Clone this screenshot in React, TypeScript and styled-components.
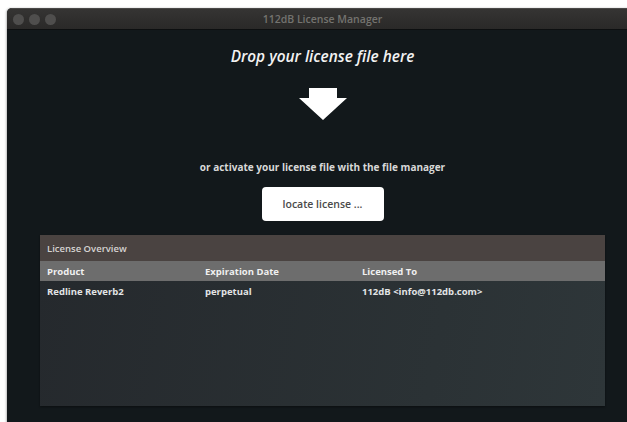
import React from "react";
import styled, { createGlobalStyle } from "styled-components";

const GlobalStyle = createGlobalStyle`
  html, body {
    margin: 0;
    padding: 0;
    background: #ffffff;
    overflow: hidden;
  }
  body {
    font-family: "Open Sans", "DejaVu Sans", sans-serif;
  }
`;

const Window = styled.div`
  margin: 8px 0 0 7px;
  width: 631px;
  height: 430px;
  display: flex;
  flex-direction: column;
  background: #12181b;
  border-top-left-radius: 5px;
  overflow: hidden;
  box-shadow: -1px 0 2px rgba(0, 0, 0, 0.25);
`;

const TitleBar = styled.div`
  position: relative;
  height: 22px;
  flex: none;
  display: flex;
  align-items: center;
  justify-content: center;
  background: linear-gradient(#353433, #2a2928);
  border-top: 1px solid #4a4948;
  box-sizing: border-box;
  border-bottom: 1px solid #0d0f10;
`;

const Lights = styled.div`
  position: absolute;
  left: 6px;
  top: 5px;
  display: flex;
  gap: 5px;
`;

const Light = styled.span`
  width: 11px;
  height: 11px;
  border-radius: 50%;
  background: #4f4e4d;
`;

const Title = styled.div`
  font-size: 10.5px;
  font-weight: 600;
  color: #74736f;
`;

const Content = styled.div`
  flex: 1;
  display: flex;
  flex-direction: column;
  align-items: center;
  padding-top: 17px;
`;

const DropText = styled.div`
  font-size: 15.4px;
  font-style: italic;
  font-weight: 600;
  color: #f2f2f2;
  line-height: 20px;
`;

const Arrow = styled.svg`
  margin-top: 21px;
  display: block;
`;

const Hint = styled.div`
  margin-top: 40px;
  font-size: 10px;
  font-weight: 700;
  color: #d8d8d8;
  line-height: 14px;
`;

const LocateButton = styled.button`
  margin-top: 13px;
  width: 122px;
  height: 34px;
  border: none;
  border-radius: 4px;
  background: #ffffff;
  color: #4a4a4a;
  font-family: "Open Sans", "DejaVu Sans", sans-serif;
  font-size: 10.5px;
  font-weight: 600;
  cursor: pointer;
`;

const Panel = styled.div`
  margin-top: 14px;
  width: 565px;
  height: 171px;
  display: flex;
  flex-direction: column;
  background: linear-gradient(100deg, #25292d 0%, #2b3235 70%, #2e3639 100%);
  box-shadow: 0 1px 2px rgba(0, 0, 0, 0.4);
`;

const PanelHeader = styled.div`
  height: 26px;
  display: flex;
  align-items: center;
  padding-left: 7px;
  background: #4a4341;
  color: #d6d3d2;
  font-size: 9.5px;
  font-weight: 600;
`;

const Row = styled.div<{ $head?: boolean }>`
  display: grid;
  grid-template-columns: 158px 157px 1fr;
  height: 20px;
  align-items: center;
  padding-left: 7px;
  font-size: 9.5px;
  font-weight: 700;
  color: ${(p) => (p.$head ? "#f0f0f0" : "#e2e4e5")};
  background: ${(p) => (p.$head ? "#6d6d6d" : "transparent")};
`;

const licenses = [
  { product: "Redline Reverb2", expires: "perpetual", owner: "112dB <info@112db.com>" },
];

const App = () => (
  <>
    <GlobalStyle />
    <Window>
      <TitleBar>
        <Lights>
          <Light />
          <Light />
          <Light />
        </Lights>
        <Title>112dB License Manager</Title>
      </TitleBar>
      <Content>
        <DropText>Drop your license file here</DropText>
        <Arrow width="48" height="32" viewBox="0 0 48 32">
          <path d="M10 0 H38 V10 H48 L24 32 L0 10 H10 Z" fill="#ffffff" />
        </Arrow>
        <Hint>or activate your license file with the file manager</Hint>
        <LocateButton>locate license ...</LocateButton>
        <Panel>
          <PanelHeader>License Overview</PanelHeader>
          <Row $head>
            <span>Product</span>
            <span>Expiration Date</span>
            <span>Licensed To</span>
          </Row>
          {licenses.map((l) => (
            <Row key={l.product}>
              <span>{l.product}</span>
              <span>{l.expires}</span>
              <span>{l.owner}</span>
            </Row>
          ))}
        </Panel>
      </Content>
    </Window>
  </>
);

export default App;
